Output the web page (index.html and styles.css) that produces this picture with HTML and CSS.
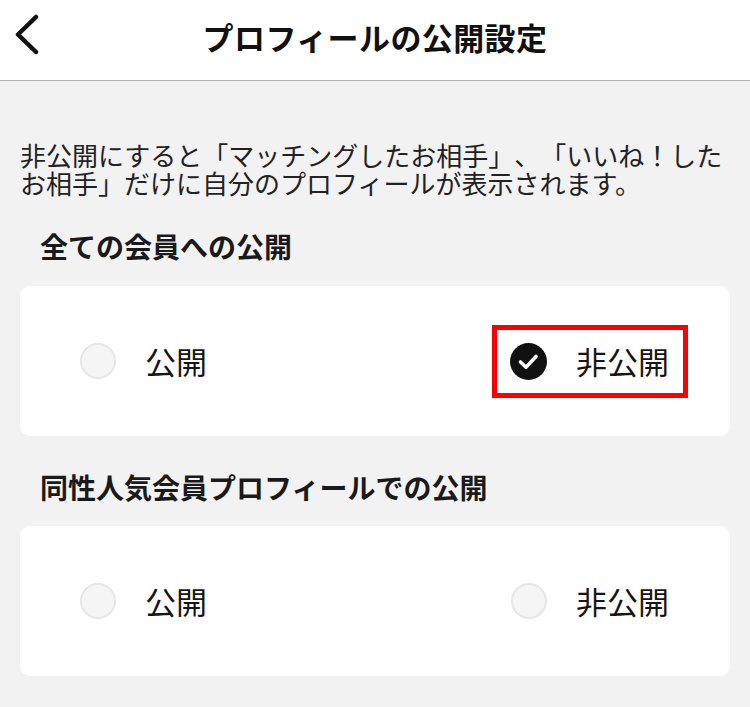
FILE: index.html
```html
<!DOCTYPE html>
<html lang="ja">
<head>
<meta charset="utf-8">
<title>プロフィールの公開設定</title>
<link rel="stylesheet" href="styles.css">
</head>
<body>
<header class="header">
  <button class="back" aria-label="戻る">
    <svg width="30" height="44" viewBox="0 0 30 44"><path d="M22 3 L4 20.5 L22 38" fill="none" stroke="#111" stroke-width="4.5" stroke-linecap="round" stroke-linejoin="round"/></svg>
  </button>
  <h1 class="title">プロフィールの公開設定</h1>
</header>
<main class="content">
  <p class="desc">非公開にすると「マッチングしたお相手」、「いいね！したお相手」だけに自分のプロフィールが表示されます。</p>

  <h2 class="section-title">全ての会員への公開</h2>
  <div class="card">
    <div class="option">
      <span class="radio"></span>
      <span class="label">公開</span>
    </div>
    <div class="option highlight">
      <span class="radio checked">
        <svg width="37" height="37" viewBox="0 0 37 37"><circle cx="18.5" cy="18.5" r="18.5" fill="#111"/><path d="M10.5 19 L16 24.2 L26 13.5" fill="none" stroke="#fff" stroke-width="3.6" stroke-linecap="round" stroke-linejoin="round"/></svg>
      </span>
      <span class="label">非公開</span>
    </div>
  </div>

  <h2 class="section-title second">同性人気会員プロフィールでの公開</h2>
  <div class="card">
    <div class="option">
      <span class="radio"></span>
      <span class="label">公開</span>
    </div>
    <div class="option">
      <span class="radio"></span>
      <span class="label">非公開</span>
    </div>
  </div>
</main>
</body>
</html>
```

FILE: styles.css
```css
* { box-sizing: border-box; }

html, body {
  margin: 0;
  padding: 0;
  background: #f2f2f2;
  font-family: "Noto Sans CJK JP", "Noto Sans", sans-serif;
  color: #161616;
  text-spacing-trim: space-all;
}

.header {
  position: relative;
  height: 81px;
  background: #fff;
  border-bottom: 1px solid #b4b4b4;
  display: flex;
  align-items: center;
  justify-content: center;
  padding-bottom: 6px;
}

.back {
  position: absolute;
  left: 14px;
  top: 14px;
  padding: 0;
  margin: 0;
  border: 0;
  background: none;
  width: 30px;
  height: 44px;
  display: block;
}
.back svg { display: block; }

.title {
  margin: 0;
  font-size: 31px;
  font-weight: 700;
  line-height: 36px;
  letter-spacing: 0.4px;
  color: #111;
}

.content {
  padding: 60px 20px 0;
}

.desc {
  margin: 0;
  font-size: 26px;
  line-height: 28px;
  color: #222;
}

.section-title {
  margin: 35px 0 0 20px;
  font-size: 28px;
  line-height: 28px;
  font-weight: 700;
  color: #1a1a1a;
}
.section-title.second {
  margin-top: 37px;
}

.card {
  margin-top: 26px;
  height: 150px;
  background: #fff;
  border-radius: 10px;
  padding: 0 42px;
  display: flex;
  align-items: center;
  justify-content: space-between;
}
.section-title.second + .card { margin-top: 25px; }

.option {
  display: flex;
  align-items: center;
  gap: 29px;
  padding: 13px 14px 13px 13px;
  border: 5px solid transparent;
}
.option.highlight {
  border-color: #ff0000;
}

.radio {
  width: 36px;
  height: 36px;
  flex: none;
  border-radius: 50%;
  background: #f5f5f5;
  border: 2px solid #e6e6e6;
  display: block;
}
.radio.checked {
  width: 37px;
  height: 37px;
  background: none;
  border: 0;
}
.radio.checked svg { display: block; }

.label {
  font-size: 31px;
  line-height: 36px;
  color: #161616;
}
```
